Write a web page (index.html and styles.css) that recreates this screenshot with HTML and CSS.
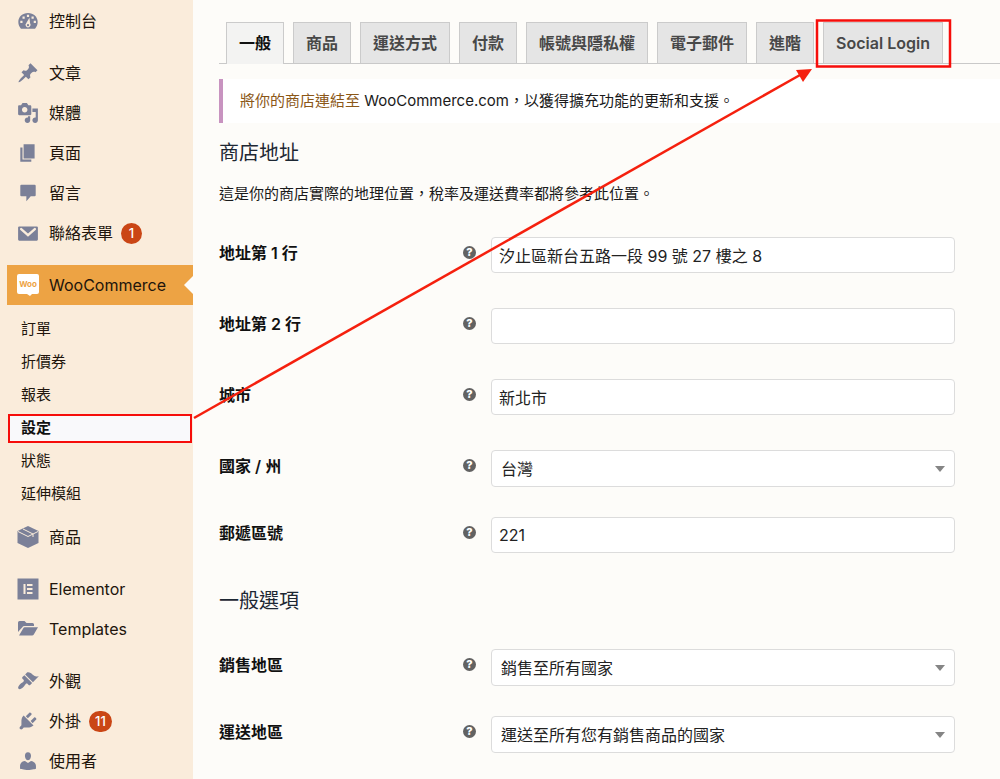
FILE: index.html
```html
<!DOCTYPE html>
<html lang="zh-Hant">
<head>
<meta charset="utf-8">
<title>WooCommerce 設定</title>
<link rel="stylesheet" href="styles.css">
</head>
<body>
<div class="page">
  <nav class="sidebar" aria-label="主選單">
    <ul class="menu">
      <li><a class="menu-link" href="#"><svg class="icon" viewBox="0 0 20 20"><path fill-rule="evenodd" d="M3.600 17C2.200 15.600 1.200 13.500 1.200 11 1.200 6.200 5 2.800 10 2.800S18.800 6.200 18.800 11c0 2.500-1 4.600-2.400 6zM9 4.300v2h2v-2zM5 5.900v2h2v-2zM13.200 5.900v2h2v-2zM3 9.800v2h2v-2zM15.200 9.800v2h2v-2zM11.300 7 8.500 11.800a2.300 2.300 0 1 0 3.400.3zM10 12.800a1 1 0 1 1 0 2 1 1 0 0 1 0-2z"/></svg><span>控制台</span></a></li>
    </ul>
    <ul class="menu">
      <li><a class="menu-link" href="#"><svg class="icon" viewBox="0 0 20 20"><path d="M10.440 3.020l1.820-1.820 6.360 6.350-1.830 1.820c-1.050-.68-2.480-.57-3.410.36l-.75.75c-.92.93-1.040 2.350-.35 3.410l-1.830 1.820-2.410-2.410-2.800 2.790c-.42.42-3.380 2.710-3.800 2.290s1.860-3.390 2.280-3.810l2.790-2.790L4.100 9.360l1.830-1.820c1.050.69 2.480.57 3.400-.36l.75-.75c.93-.92 1.050-2.350.36-3.410z"/></svg><span>文章</span></a></li>
      <li><a class="menu-link" href="#"><svg class="icon" viewBox="0 0 20 20"><path fill-rule="evenodd" d="M13 11V4c0-.55-.45-1-1-1h-1.670L9 1H5L3.670 3H2c-.55 0-1 .45-1 1v7c0 .55.45 1 1 1h10c.55 0 1-.45 1-1zM7 4.500c1.380 0 2.500 1.120 2.500 2.500S8.380 9.500 7 9.500 4.500 8.380 4.500 7 5.620 4.500 7 4.500zM14 6h5v10.500c0 1.380-1.120 2.500-2.500 2.500S14 17.880 14 16.500s1.120-2.500 2.500-2.500c.17 0 .34.02.5.05V9h-3V6zm-4 8.050V13h2v3.500c0 1.380-1.120 2.500-2.500 2.500S7 17.880 7 16.500 8.120 14 9.500 14c.17 0 .34.02.5.05z"/></svg><span>媒體</span></a></li>
      <li><a class="menu-link" href="#"><svg class="icon" viewBox="0 0 20 20"><path d="M6 15V2h10v13H6zm-1 1h8v2H3V5h2v11z"/></svg><span>頁面</span></a></li>
      <li><a class="menu-link" href="#"><svg class="icon" viewBox="0 0 20 20"><path d="M4 2.500h12q1 0 1 1v8.500q0 1-1 1h-3.500L8.500 17.500V13H4q-1 0-1-1V3.500q0-1 1-1z"/></svg><span>留言</span></a></li>
      <li><a class="menu-link" href="#"><svg class="icon" viewBox="0 0 20 20"><rect x="1" y="4" width="18" height="13" rx="1"/><path d="M3.800 6.500 10 12l6.200-5.500" fill="none" stroke="#faecdb" stroke-width="2.200" stroke-linecap="round"/></svg><span>聯絡表單</span><span class="badge">1</span></a></li>
    </ul>
    <ul class="menu">
      <li>
        <a class="menu-link menu-link-open" href="#"><svg class="icon" viewBox="0 0 22 22"><path fill="#fff" d="M2 0h18a2 2 0 0 1 2 2v16a2 2 0 0 1-2 2h-5l-2 2-3-2H2a2 2 0 0 1-2-2V2a2 2 0 0 1 2-2z"/><text x="11" y="13" text-anchor="middle" class="woo-mark">Woo</text></svg><span>WooCommerce</span></a>
        <ul class="submenu">
          <li><a href="#">訂單</a></li>
          <li><a href="#">折價券</a></li>
          <li><a href="#">報表</a></li>
          <li><a class="current" href="#" aria-current="page">設定</a></li>
          <li><a href="#">狀態</a></li>
          <li><a href="#">延伸模組</a></li>
        </ul>
      </li>
      <li><a class="menu-link" href="#"><svg class="icon" viewBox="0 0 22 22"><path d="M11 0l10.500 5v12L11 22 .5 17V5z"/><path d="M1 5.500 11 10.500 21 5.500M6 3l10 5v3" fill="none" stroke="#faecdb" stroke-width="1"/></svg><span>商品</span></a></li>
    </ul>
    <ul class="menu">
      <li><a class="menu-link" href="#"><svg class="icon" viewBox="0 0 22 22"><path fill-rule="evenodd" d="M.5.500h21v21H.5zM6.500 6v10h2V6zM10 6v2h5.500V6zM10 10v2h5.500v-2zM10 14v2h5.500v-2z"/></svg><span>Elementor</span></a></li>
      <li><a class="menu-link" href="#"><svg class="icon" viewBox="0 0 22 22"><path d="M1 14V4.500Q1 3 2.500 3h5l2 2h6q1.500 0 1.500 1.500V8H7.500Q6 8 5.300 9.200zM2 17.500 6.300 10.200Q6.700 9.300 7.700 9.300H21l-4.200 7.200q-.6 1-1.800 1z"/></svg><span>Templates</span></a></li>
    </ul>
    <ul class="menu">
      <li><a class="menu-link" href="#"><svg class="icon" viewBox="0 0 20 20"><path d="M14.480 11.060L7.410 3.990l1.500-1.500c.5-.56 2.300-.47 3.510.32 1.210.8 1.430 1.280 2.910 2.100 1.180.64 2.450 1.260 4.450.85zm-.71.71L6.700 4.700 4.930 6.470c-.39.39-.39 1.020 0 1.410l1.060 1.060c.39.39.39 1.030 0 1.420-.6.6-1.430 1.110-2.210 1.690-.35.26-.7.53-1.010.84C1.430 14.230.4 16.080 1.400 17.070c.99 1 2.840-.03 4.180-1.360.31-.31.58-.66.85-1.020.57-.78 1.080-1.610 1.690-2.210.39-.39 1.020-.39 1.410 0l1.060 1.060c.39.39 1.020.39 1.410 0z"/></svg><span>外觀</span></a></li>
      <li><a class="menu-link" href="#"><svg class="icon" viewBox="0 0 20 20"><path d="M13.110 4.360L9.870 7.600 8 5.730l3.240-3.240c.35-.34 1.050-.2 1.560.32.52.51.66 1.210.31 1.550zm-8 1.770l.91-1.120 9.010 9.010-1.190.84c-.71.71-2.630 1.160-3.820 1.160H6.140L4.900 17.260c-.59.59-1.540.59-2.120 0-.59-.58-.59-1.530 0-2.120l1.240-1.240v-3.880c0-1.130.4-3.190 1.090-3.890zm7.260 3.970l3.240-3.240c.34-.35 1.040-.21 1.550.31.52.51.66 1.210.31 1.550l-3.240 3.250z"/></svg><span>外掛</span><span class="badge">11</span></a></li>
      <li><a class="menu-link" href="#"><svg class="icon" viewBox="0 0 20 20"><path d="M10 9.250c-2.270 0-2.730-3.440-2.730-3.440C7 4.020 7.820 2 9.970 2c2.160 0 2.980 2.020 2.710 3.810 0 0-.41 3.440-2.680 3.440zm0 2.570L12.720 10c2.390 0 4.520 2.330 4.520 4.530v2.490s-3.650 1.130-7.240 1.130c-3.650 0-7.240-1.130-7.240-1.130v-2.490c0-2.250 1.940-4.480 4.470-4.480z"/></svg><span>使用者</span></a></li>
    </ul>
  </nav>

  <main class="content">
    <nav class="tabs" aria-label="設定分頁">
      <a class="tab tab-active" href="#">一般</a>
      <a class="tab" href="#">商品</a>
      <a class="tab" href="#">運送方式</a>
      <a class="tab" href="#">付款</a>
      <a class="tab" href="#">帳號與隱私權</a>
      <a class="tab" href="#">電子郵件</a>
      <a class="tab" href="#">進階</a>
      <a class="tab" href="#">Social Login</a>
    </nav>

    <p class="notice"><a href="#">將你的商店連結至</a> WooCommerce.com，以獲得擴充功能的更新和支援。</p>

    <form class="settings">
      <section>
        <h2>商店地址</h2>
        <p class="description">這是你的商店實際的地理位置，稅率及運送費率都將參考此位置。</p>
        <div class="fields">
          <div class="field field-tall">
            <label for="address1">地址第 1 行</label><span class="help">?</span>
            <input id="address1" type="text" value="汐止區新台五路一段 99 號 27 樓之 8">
          </div>
          <div class="field field-tall">
            <label for="address2">地址第 2 行</label><span class="help">?</span>
            <input id="address2" type="text">
          </div>
          <div class="field field-tall">
            <label for="city">城市</label><span class="help">?</span>
            <input id="city" type="text" value="新北市">
          </div>
          <div class="field">
            <label for="country">國家 / 州</label><span class="help">?</span>
            <div class="select"><select id="country"><option>台灣</option></select></div>
          </div>
          <div class="field">
            <label for="postcode">郵遞區號</label><span class="help">?</span>
            <input id="postcode" type="text" value="221">
          </div>
        </div>
      </section>
      <section>
        <h2>一般選項</h2>
        <div class="fields">
          <div class="field">
            <label for="selling">銷售地區</label><span class="help">?</span>
            <div class="select"><select id="selling"><option>銷售至所有國家</option></select></div>
          </div>
          <div class="field">
            <label for="shipping">運送地區</label><span class="help">?</span>
            <div class="select"><select id="shipping"><option>運送至所有您有銷售商品的國家</option></select></div>
          </div>
        </div>
      </section>
    </form>
  </main>

  <svg class="annotations" width="1000" height="779" viewBox="0 0 1000 779" aria-hidden="true">
    <rect x="9" y="415" width="182" height="27" fill="none" stroke="#f60d0a" stroke-width="2"/>
    <rect x="817" y="20.500" width="133" height="46" fill="none" stroke="#f60d0a" stroke-width="2.500"/>
    <path d="M194 418 800 75" stroke="#f5200e" stroke-width="2.500"/>
    <path d="M812 69 796 70 803 82z" fill="#f5200e"/>
  </svg>
</div>
</body>
</html>
```
FILE: styles.css
```css
* { box-sizing: border-box; }

body {
  margin: 0;
  background: #fdfcf9;
  color: #1a1a1a;
  font: 15px/24px Inter, "Noto Sans CJK TC", sans-serif;
}

ul, h2, p { margin: 0; padding: 0; }
ul { list-style: none; }
a { color: inherit; text-decoration: none; }

.page {
  position: relative;
  display: flex;
  height: 100vh;
  overflow: hidden;
}

/* Sidebar */
.sidebar {
  display: flex;
  flex-direction: column;
  flex: none;
  gap: 12px;
  width: 193px;
  padding: 1px 0 0 7px;
  background: #faecdb;
}

.menu-link {
  display: flex;
  align-items: center;
  height: 40px;
  padding-left: 10px;
  color: #21150c;
  font-size: 16px;
}

.icon {
  flex: none;
  width: 22px;
  height: 22px;
  margin-right: 10px;
  fill: #7b8098;
}

.badge {
  min-width: 21px;
  height: 21px;
  margin-left: 8px;
  padding: 0 6px;
  border-radius: 11px;
  background: #ca4615;
  color: #fff;
  font-size: 13px;
  font-weight: 500;
  line-height: 21px;
  text-align: center;
}

.menu-link-open {
  position: relative;
  background: #eda344;
}

.menu-link-open::after {
  content: "";
  position: absolute;
  right: 0;
  top: 11px;
  border: 9px solid transparent;
  border-left: 0;
  border-right-color: #fdfcf9;
}

.woo-mark {
  fill: #eda344;
  font-size: 8px;
  font-weight: 700;
}

.submenu { padding: 7px 0; }

.submenu a {
  display: block;
  padding-left: 14px;
  color: #21150c;
  line-height: 33px;
}

.submenu .current {
  padding: 3px 2px 3px 1px;
  background: #f9f9fb;
  background-clip: content-box;
  color: #111;
  font-weight: 600;
  line-height: 27px;
  text-indent: 13px;
}

/* Content */
.content {
  flex: 1;
  min-width: 0;
  padding: 22px 0 0 26px;
}

.tabs {
  display: flex;
  gap: 9px;
  padding-left: 7px;
  border-bottom: 1px solid #c9c9c9;
}

.tab {
  height: 41px;
  padding: 0 12px;
  border: 1px solid #cbcbcb;
  border-bottom: 0;
  background: #e5e5e5;
  color: #484848;
  font-size: 16px;
  font-weight: 600;
  line-height: 40px;
  white-space: nowrap;
}

.tab-active {
  height: 42px;
  margin-bottom: -1px;
  background: #f3f3f2;
  color: #111;
}

.notice {
  margin-top: 15px;
  padding: 10px 17px;
  border-left: 4px solid #c893c0;
  background: #fff;
}

.notice a { color: #8b5717; }

.settings { padding-right: 45px; }

h2 {
  padding: 17px 0 14px;
  color: #1d2733;
  font-size: 20px;
  font-weight: 400;
  line-height: 26px;
}

.description { padding: 2px 0 16px; }

section + section h2 { padding: 20px 0; }

.field {
  display: grid;
  grid-template-columns: 244px 28px 1fr;
  align-items: start;
  padding: 15px 0;
}

.field-tall { padding-bottom: 20px; }

.field label {
  color: #111;
  font-size: 16px;
  font-weight: 600;
  line-height: 32px;
}

.help {
  width: 13px;
  height: 13px;
  margin-top: 9px;
  border-radius: 50%;
  background: #626262;
  color: #fff;
  font-size: 11px;
  font-weight: 800;
  line-height: 13px;
  text-align: center;
}

input, select {
  width: 100%;
  height: 36px;
  padding: 0 7px;
  border: 1px solid #dcdcdc;
  border-radius: 4px;
  background: #fff;
  color: #222;
  font: inherit;
  font-size: 16px;
}

.select { position: relative; height: 37px; }

.select select {
  height: 37px;
  padding: 1px 9px 0;
  appearance: none;
}

.select::after {
  content: "";
  position: absolute;
  right: 10px;
  top: 16px;
  border: 5px solid transparent;
  border-top: 6px solid #858585;
  border-bottom: 0;
  pointer-events: none;
}

.annotations {
  position: absolute;
  top: 0;
  left: 0;
  pointer-events: none;
}
```
